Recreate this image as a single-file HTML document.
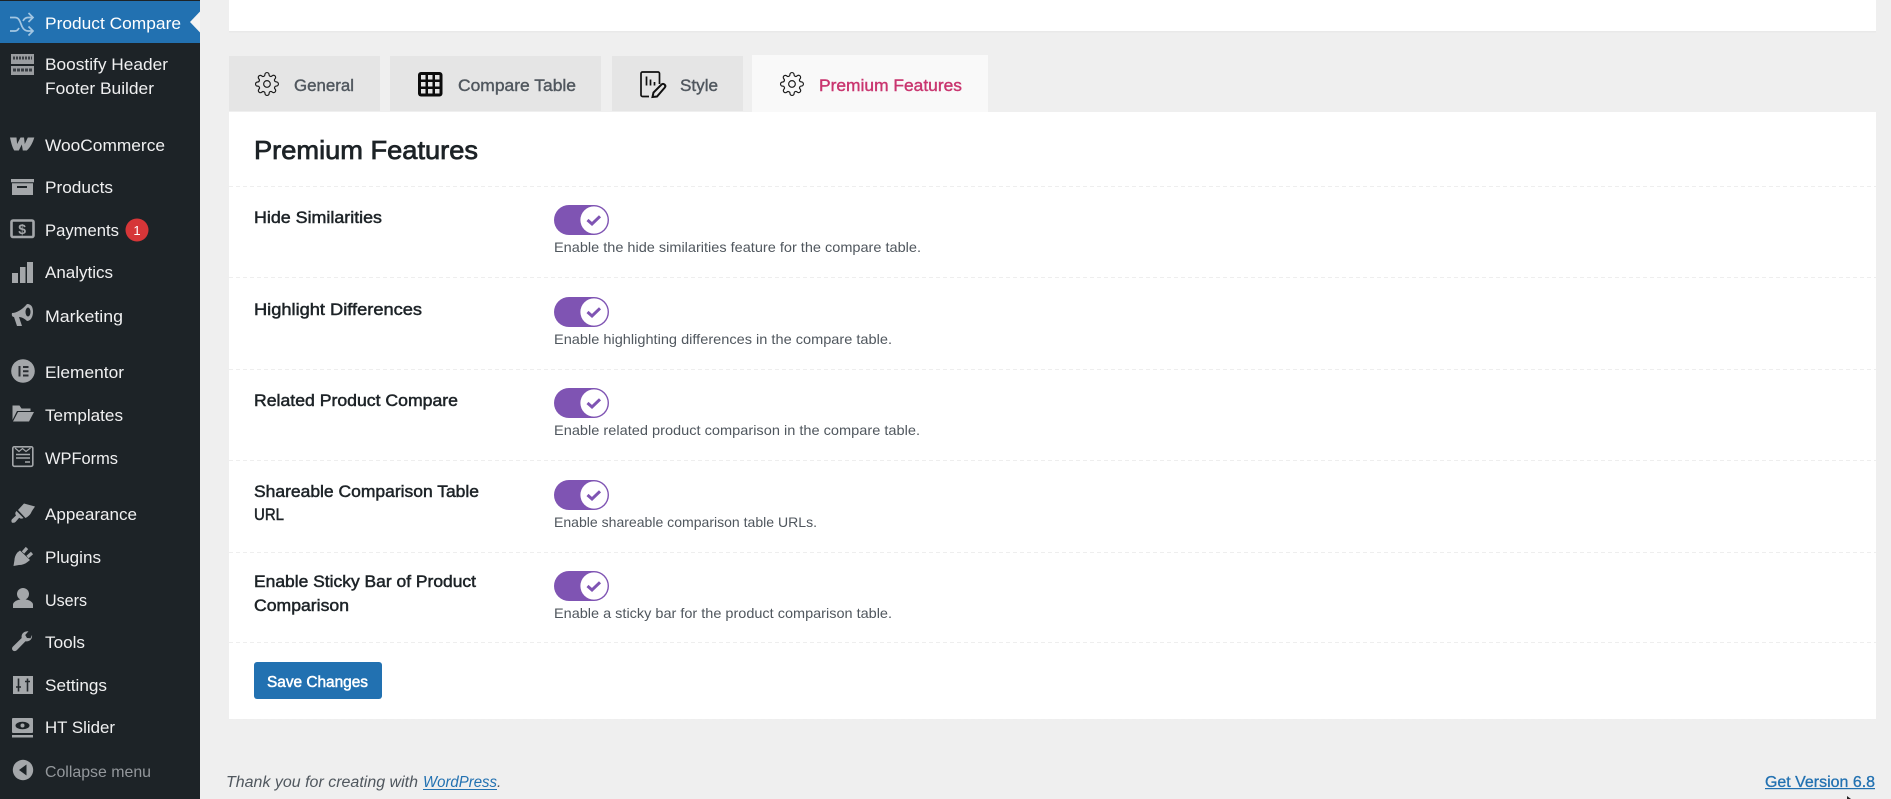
<!DOCTYPE html>
<html lang="en">
<head>
<meta charset="utf-8">
<title>Product Compare – Premium Features</title>
<style>
html,body{margin:0;padding:0;width:1891px;height:799px;overflow:hidden;background:#efefef}
svg{display:block}
text{font-family:"Liberation Sans",Arial,sans-serif;white-space:pre}
.m{font-size:17px;fill:#f0f0f1}
.t{font-size:17px;fill:#50575e;stroke:#50575e;stroke-width:.4}
.l{font-size:17px;fill:#1d2327;stroke:#1d2327;stroke-width:.5}
.h{font-size:14px;fill:#50575e}
.i{fill:#a4a7aa}
</style>
</head>
<body>
<svg xmlns="http://www.w3.org/2000/svg" width="1891" height="799" viewBox="0 0 1891 799">
<defs>
<g id="gear"><circle cx="12" cy="12" r="3.2"/><path d="M19.4 15a1.65 1.65 0 0 0 .33 1.82l.06.06a2 2 0 0 1 0 2.83 2 2 0 0 1-2.83 0l-.06-.06a1.65 1.65 0 0 0-1.82-.33 1.65 1.65 0 0 0-1 1.51V21a2 2 0 0 1-2 2 2 2 0 0 1-2-2v-.09A1.65 1.65 0 0 0 9 19.4a1.65 1.65 0 0 0-1.82.33l-.06.06a2 2 0 0 1-2.83 0 2 2 0 0 1 0-2.83l.06-.06a1.65 1.65 0 0 0 .33-1.82 1.65 1.65 0 0 0-1.51-1H3a2 2 0 0 1-2-2 2 2 0 0 1 2-2h.09A1.65 1.65 0 0 0 4.6 9a1.65 1.65 0 0 0-.33-1.82l-.06-.06a2 2 0 0 1 0-2.83 2 2 0 0 1 2.83 0l.06.06a1.65 1.65 0 0 0 1.82.33H9a1.65 1.65 0 0 0 1-1.51V3a2 2 0 0 1 2-2 2 2 0 0 1 2 2v.09a1.65 1.65 0 0 0 1 1.51 1.65 1.65 0 0 0 1.82-.33l.06-.06a2 2 0 0 1 2.83 0 2 2 0 0 1 0 2.83l-.06.06a1.65 1.65 0 0 0-.33 1.82V9a1.65 1.65 0 0 0 1.51 1H21a2 2 0 0 1 2 2 2 2 0 0 1-2 2h-.09a1.65 1.65 0 0 0-1.51 1z"/></g>
<g id="tog"><rect x="0" y="0" width="55" height="30" rx="15" fill="#7f54b3"/><circle cx="40" cy="15" r="13.600" fill="#fff"/><path d="M33.500 15l4.500 4 8-7.700" fill="none" stroke="#7f54b3" stroke-width="3"/></g>
</defs>

<!-- page -->
<rect width="1891" height="799" fill="#efefef"/>
<rect x="229" y="0" width="1647" height="31" fill="#fff"/>
<rect x="229" y="31" width="1647" height="1.500" fill="#e9e9e9"/>

<!-- sidebar -->
<rect x="0" y="0" width="200" height="799" fill="#1d2327"/>
<rect x="0" y="1" width="200" height="42" fill="#2271b1"/>
<path d="M200 11.500L190 22l10 10.500z" fill="#f4f4f4"/>

<!-- compare shuffle icon -->
<g fill="none" stroke="#a3c6e2" stroke-width="1.700">
<path d="M10 17.500h5c3 0 4 2 5 4l2 5c1.500 3 3 4.500 6 4.500h5"/>
<path d="M10 31h5c2 0 3-1 4-3M23 21c1-2 2.500-3.500 5-3.500h5"/>
<path d="M28.500 13l4.500 4.500-4.500 4.500M28.500 26.500l4.500 4.500-4.500 4.500"/>
</g>
<!-- boostify -->
<g>
<rect x="11" y="54" width="23" height="10" fill="#9a9da0"/><rect x="11" y="66" width="23" height="9" fill="#9a9da0"/>
<path d="M13 58h19" stroke="#3a3f44" stroke-width="3" stroke-dasharray="2 1"/>
<path d="M13 70h19" stroke="#3a3f44" stroke-width="3" stroke-dasharray="3 1"/>
</g>
<!-- woo -->
<path class="i" d="M10 137.500h6.500l.6 6.500 3.400-6.500h3.500l.8 6.500 3-6.500h6.500c-1.500 5-4 10-7.500 13h-4l-1-6-3 6h-4.500C12 147 11 142 10 137.500z"/>
<!-- products -->
<path class="i" d="M11 179h23v3.300H11zM12 183.300h21V195H12zM17 186v2h10v-2z" fill-rule="evenodd"/>
<!-- payments -->
<rect x="11.500" y="220.500" width="22" height="16.500" rx="1.500" fill="none" stroke="#a4a7aa" stroke-width="2.600"/>
<text x="18.300" y="234" font-size="14" font-weight="700" fill="#a4a7aa">$</text>
<!-- analytics -->
<path class="i" d="M12 273h6v10h-6zM20 267h5.500v16H20zM27 262h6v21h-6z"/>
<!-- marketing -->
<path class="i" d="M12 313c4 0 10-3 15-9 5 0 6 4 6 8s-2 9-6 9c-2-2-5-4-8-4l3 9h-5l-3-9c-2 0-2.500-2-2-4z"/>
<ellipse cx="28" cy="312" rx="2.500" ry="4.500" fill="#1d2327"/>
<!-- elementor -->
<circle class="i" cx="23" cy="371" r="11.800"/>
<path d="M18.500 366h2v10.500h-2zM23 366h5.500v2h-5.500zM23 370.300h5.500v2h-5.500zM23 374.500h5.500v2h-5.500z" fill="#2a2e33"/>
<!-- templates -->
<path class="i" d="M12.500 405.500h7l2 3h9v2.500H17l-4.500 9zM18 412h16l-5 9.500H13z"/>
<!-- wpforms -->
<rect x="12.800" y="446.800" width="20" height="19.500" rx="1.500" fill="none" stroke="#a4a7aa" stroke-width="1.600"/>
<path d="M15 448l4 3.500 3.500-3 3.500 3 4.500-3.500" fill="none" stroke="#a4a7aa" stroke-width="1.200"/>
<path d="M16 454.500h14M16 458h14M25 462h5" stroke="#a4a7aa" stroke-width="1.600"/>
<!-- appearance -->
<path class="i" d="M24 503.500l11 3c-2 3-3.500 5-4 6.500-1.200 2-3 3.800-5.500 5L18 510zM16.500 511l7 7c-1.500 1-3 .8-4.300-.3l-3.500 4c-1 1-2.200 1.300-3.700 1-.8-1-.8-2.700 0-3.500l4-3.700c-1-1.400-1-3 .5-4.500z"/>
<!-- plugins -->
<path class="i" d="M13.500 566l.9-5.500c.1-3 1-5.500 3-8l2.600-2 10 9.500-2.500 2c-2.500 2-5.500 3-8.500 3z"/>
<path d="M23 552.500l4-4.500M27.500 557l4.500-4" stroke="#a4a7aa" stroke-width="3.200" fill="none"/>
<!-- users -->
<circle class="i" cx="23" cy="594" r="6"/>
<path class="i" d="M13 608v-3.500c0-2.500 4-4.500 7-5h6c3 .5 7 2.500 7 5v3.500z"/>
<!-- tools -->
<path d="M32 635c.5 3.500-2 7-6.500 6.300L17 650c-1.500 1.500-3.500 1.300-4.300.3-1-1-.8-2.800.3-3.800l8.700-8.500c-.8-3.800 2-7 6.800-6.700l-3.300 3.700 1.800 3 3.500 .2z" class="i"/>
<!-- settings -->
<rect class="i" x="13" y="676" width="20" height="18"/>
<path d="M18.500 678.500v13M27.500 678.500v13M16 687h5M25 681.500h5" stroke="#22272b" stroke-width="1.600"/>
<!-- ht slider -->
<rect class="i" x="12" y="718" width="21" height="15" rx="1"/>
<rect class="i" x="12" y="735" width="21" height="2.500"/>
<ellipse cx="22.500" cy="725.500" rx="7" ry="3.800" fill="#1d2327"/>
<circle class="i" cx="22.500" cy="725.500" r="2"/>
<!-- collapse -->
<circle class="i" cx="23" cy="770" r="10.200"/>
<path d="M26.500 764.500v11l-7.500-5.500z" fill="#1d2327"/>

<!-- menu labels -->
<text class="m" x="45" y="29" textLength="136" lengthAdjust="spacingAndGlyphs" style="fill:#fff">Product Compare</text>
<text class="m" x="45" y="70" textLength="123" lengthAdjust="spacingAndGlyphs">Boostify Header</text>
<text class="m" x="45" y="94" textLength="109" lengthAdjust="spacingAndGlyphs">Footer Builder</text>
<text class="m" x="45" y="151" textLength="120" lengthAdjust="spacingAndGlyphs">WooCommerce</text>
<text class="m" x="45" y="193" textLength="68" lengthAdjust="spacingAndGlyphs">Products</text>
<text class="m" x="45" y="236" textLength="74" lengthAdjust="spacingAndGlyphs">Payments</text>
<circle cx="137" cy="230" r="11.500" fill="#d63638"/>
<text x="137" y="235" font-size="13" fill="#fff" text-anchor="middle">1</text>
<text class="m" x="45" y="278" textLength="68" lengthAdjust="spacingAndGlyphs">Analytics</text>
<text class="m" x="45" y="322" textLength="78" lengthAdjust="spacingAndGlyphs">Marketing</text>
<text class="m" x="45" y="378" textLength="79" lengthAdjust="spacingAndGlyphs">Elementor</text>
<text class="m" x="45" y="421" textLength="78" lengthAdjust="spacingAndGlyphs">Templates</text>
<text class="m" x="45" y="464" textLength="73" lengthAdjust="spacingAndGlyphs">WPForms</text>
<text class="m" x="45" y="520" textLength="92" lengthAdjust="spacingAndGlyphs">Appearance</text>
<text class="m" x="45" y="563" textLength="56" lengthAdjust="spacingAndGlyphs">Plugins</text>
<text class="m" x="45" y="606" textLength="42" lengthAdjust="spacingAndGlyphs">Users</text>
<text class="m" x="45" y="648" textLength="40" lengthAdjust="spacingAndGlyphs">Tools</text>
<text class="m" x="45" y="691" textLength="62" lengthAdjust="spacingAndGlyphs">Settings</text>
<text class="m" x="45" y="733" textLength="70" lengthAdjust="spacingAndGlyphs">HT Slider</text>
<text class="m" x="45" y="777" textLength="106" lengthAdjust="spacingAndGlyphs" style="fill:#94989c;font-size:16px">Collapse menu</text>

<!-- tabs -->
<rect x="229" y="56" width="151" height="55" fill="#e5e5e5"/>
<rect x="390" y="56" width="211" height="55" fill="#e5e5e5"/>
<rect x="612" y="56" width="131" height="55" fill="#e5e5e5"/>
<rect x="752" y="55" width="236" height="57" fill="#f9f9f9"/>

<use href="#gear" transform="translate(254.500 71.500) scale(1.040)" fill="none" stroke="#1d1d1d" stroke-width="1.150"/>
<use href="#gear" transform="translate(779.500 71.500) scale(1.040)" fill="none" stroke="#1d1d1d" stroke-width="1.150"/>

<!-- table icon -->
<rect x="418" y="72" width="24.500" height="24.500" rx="3" fill="#0c0c0c"/>
<g fill="#e5e5e5">
<rect x="421" y="75" width="4.500" height="4.500"/><rect x="428" y="75" width="4.500" height="4.500"/><rect x="435" y="75" width="4.500" height="4.500"/>
<rect x="421" y="82" width="4.500" height="4.500"/><rect x="428" y="82" width="4.500" height="4.500"/><rect x="435" y="82" width="4.500" height="4.500"/>
<rect x="421" y="89" width="4.500" height="4.500"/><rect x="428" y="89" width="4.500" height="4.500"/><rect x="435" y="89" width="4.500" height="4.500"/>
</g>
<!-- style icon -->
<path d="M649 96.500h-6.500a1.500 1.500 0 0 1-1.500-1.500V73.500a1.500 1.500 0 0 1 1.500-1.500H658a1.500 1.500 0 0 1 1.500 1.500V84" fill="none" stroke="#111" stroke-width="1.700"/>
<path d="M646.500 76.500v9M650.500 79.500v6M654.500 82v3.500" stroke="#111" stroke-width="1.700" fill="none"/>
<path d="M652.500 97l1-4.500 8-8c1-.8 2-.8 3 0 1 1 1.200 2 .3 3L657 96.500z" fill="none" stroke="#111" stroke-width="2"/>

<text class="t" x="294" y="91" textLength="60" lengthAdjust="spacingAndGlyphs">General</text>
<text class="t" x="458" y="91" textLength="118" lengthAdjust="spacingAndGlyphs">Compare Table</text>
<text class="t" x="680" y="91" textLength="38" lengthAdjust="spacingAndGlyphs">Style</text>
<text x="819" y="91" textLength="143" lengthAdjust="spacingAndGlyphs" font-size="17" fill="#c9356f" stroke="#c9356f" stroke-width=".4">Premium Features</text>

<!-- main card -->
<rect x="229" y="112" width="1647" height="607" fill="#fff"/>
<text x="254" y="159" textLength="224" lengthAdjust="spacingAndGlyphs" font-size="26" fill="#1d2327" stroke="#1d2327" stroke-width=".75">Premium Features</text>

<g stroke="#eeeeee" stroke-width="1" stroke-dasharray="4 3">
<path d="M229 186.500H1876M229 277.500H1876M229 369.500H1876M229 460.500H1876M229 552.500H1876M229 642.500H1876M229 719.500H1876"/>
</g>

<text class="l" x="254" y="223" textLength="128" lengthAdjust="spacingAndGlyphs">Hide Similarities</text>
<text class="l" x="254" y="315" textLength="168" lengthAdjust="spacingAndGlyphs">Highlight Differences</text>
<text class="l" x="254" y="406" textLength="204" lengthAdjust="spacingAndGlyphs">Related Product Compare</text>
<text class="l" x="254" y="497" textLength="225" lengthAdjust="spacingAndGlyphs">Shareable Comparison Table</text>
<text class="l" x="254" y="520" textLength="30" lengthAdjust="spacingAndGlyphs">URL</text>
<text class="l" x="254" y="587" textLength="222" lengthAdjust="spacingAndGlyphs">Enable Sticky Bar of Product</text>
<text class="l" x="254" y="611" textLength="95" lengthAdjust="spacingAndGlyphs">Comparison</text>

<use href="#tog" x="554" y="205"/>
<use href="#tog" x="554" y="297"/>
<use href="#tog" x="554" y="388"/>
<use href="#tog" x="554" y="480"/>
<use href="#tog" x="554" y="571"/>

<text class="h" x="554" y="252" textLength="367" lengthAdjust="spacingAndGlyphs">Enable the hide similarities feature for the compare table.</text>
<text class="h" x="554" y="344" textLength="338" lengthAdjust="spacingAndGlyphs">Enable highlighting differences in the compare table.</text>
<text class="h" x="554" y="435" textLength="366" lengthAdjust="spacingAndGlyphs">Enable related product comparison in the compare table.</text>
<text class="h" x="554" y="527" textLength="263" lengthAdjust="spacingAndGlyphs">Enable shareable comparison table URLs.</text>
<text class="h" x="554" y="618" textLength="338" lengthAdjust="spacingAndGlyphs">Enable a sticky bar for the product comparison table.</text>

<!-- button -->
<rect x="254" y="662" width="128" height="37" rx="3" fill="#2271b1"/>
<text x="267" y="687" textLength="101" lengthAdjust="spacingAndGlyphs" font-size="15.500" fill="#fff" stroke="#fff" stroke-width=".5">Save Changes</text>

<!-- footer -->
<text x="226" y="787" textLength="192" lengthAdjust="spacingAndGlyphs" font-size="15.500" font-style="italic" fill="#50575e">Thank you for creating with</text>
<text x="423" y="787" textLength="74" lengthAdjust="spacingAndGlyphs" font-size="15.500" font-style="italic" fill="#2271b1">WordPress</text>
<rect x="423" y="789" width="74" height="1" fill="#2271b1"/>
<text x="497" y="787" font-size="15.500" font-style="italic" fill="#50575e">.</text>
<text x="1765" y="787" textLength="110" lengthAdjust="spacingAndGlyphs" font-size="15.500" fill="#2271b1" stroke="#2271b1" stroke-width=".3">Get Version 6.8</text>
<rect x="1765" y="788" width="110" height="1.200" fill="#2271b1"/>
<path d="M1847 796v3h4z" fill="#222"/>
</svg>
</body>
</html>
